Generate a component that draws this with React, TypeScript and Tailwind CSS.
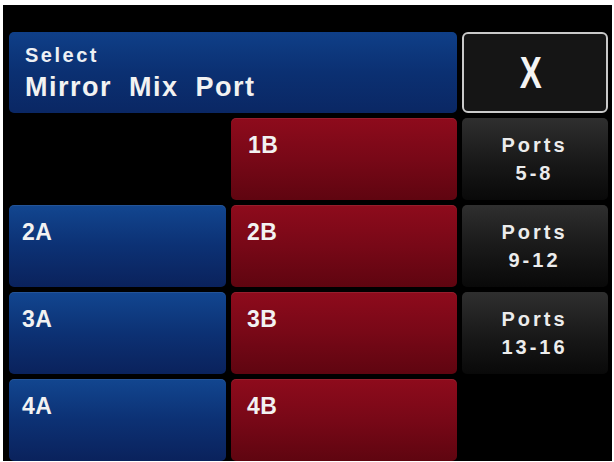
import React from "react";

const blue = "bg-gradient-to-b from-[#124690] via-[#0c3174] to-[#0a225c]";
const blueHead = "bg-gradient-to-b from-[#0f3f88] via-[#0b3072] to-[#0a2764]";
const red = "bg-gradient-to-b from-[#8e0b1c] via-[#780817] to-[#5f0510]";
const gray = "bg-gradient-to-b from-[#2f2f2f] via-[#1a1a1a] to-[#090909]";

function Label({ text, color, pl }: { text: string; color: string; pl: string }) {
  return (
    <div className={`${color} rounded-[5px] ${pl} pt-[16px] shadow-[inset_0_1px_0_rgba(255,255,255,0.08)]`}>
      <div className="text-[23px] leading-none font-bold text-[#f2f2f2] tracking-[0.5px]">{text}</div>
    </div>
  );
}

function Ports({ a, b }: { a: string; b: string }) {
  return (
    <div className={`${gray} rounded-[5px] flex flex-col items-center justify-center pr-[4px]`}>
      <div className="text-[20px] leading-[28px] font-bold text-[#ececec] tracking-[3px] pl-[3px]">{a}</div>
      <div className="text-[20px] leading-[28px] font-bold text-[#ececec] tracking-[3px] pl-[3px]">{b}</div>
    </div>
  );
}

export default function App() {
  return (
    <div
      className="w-[614px] h-[462px] bg-white pt-[5px] pl-[3px] pr-[2px] pb-[1px]"
      style={{ fontFamily: '"Liberation Sans", Arial, sans-serif' }}
    >
      <div className="w-full h-full bg-black pl-[6px] pt-[27px]">
        <div className="grid grid-cols-[217px_226px_146px] grid-rows-[81px_82px_82px_82px_82px] gap-[5px]">
          <div className={`${blueHead} col-span-2 rounded-[5px] pl-[16px] pt-[13px]`}>
            <div className="text-[20px] leading-none font-bold text-[#eef0f4] tracking-[2.5px]">Select</div>
            <div className="mt-[9px] text-[27px] leading-none font-bold text-[#f2f2f2] tracking-[1.5px] [word-spacing:8px]">
              Mirror Mix Port
            </div>
          </div>
          <div className="rounded-[6px] border-2 border-[#c9c9c9] bg-[#151515] flex items-center justify-center pr-[8px]">
            <div className="text-[44px] leading-none font-bold text-[#f4f4f4] scale-x-[0.75]">X</div>
          </div>

          <div />
          <Label text="1B" color={red} pl="pl-[17px]" />
          <Ports a="Ports" b="5-8" />

          <Label text="2A" color={blue} pl="pl-[13px]" />
          <Label text="2B" color={red} pl="pl-[16px]" />
          <Ports a="Ports" b="9-12" />

          <Label text="3A" color={blue} pl="pl-[13px]" />
          <Label text="3B" color={red} pl="pl-[16px]" />
          <Ports a="Ports" b="13-16" />

          <Label text="4A" color={blue} pl="pl-[13px]" />
          <Label text="4B" color={red} pl="pl-[16px]" />
          <div />
        </div>
      </div>
    </div>
  );
}
